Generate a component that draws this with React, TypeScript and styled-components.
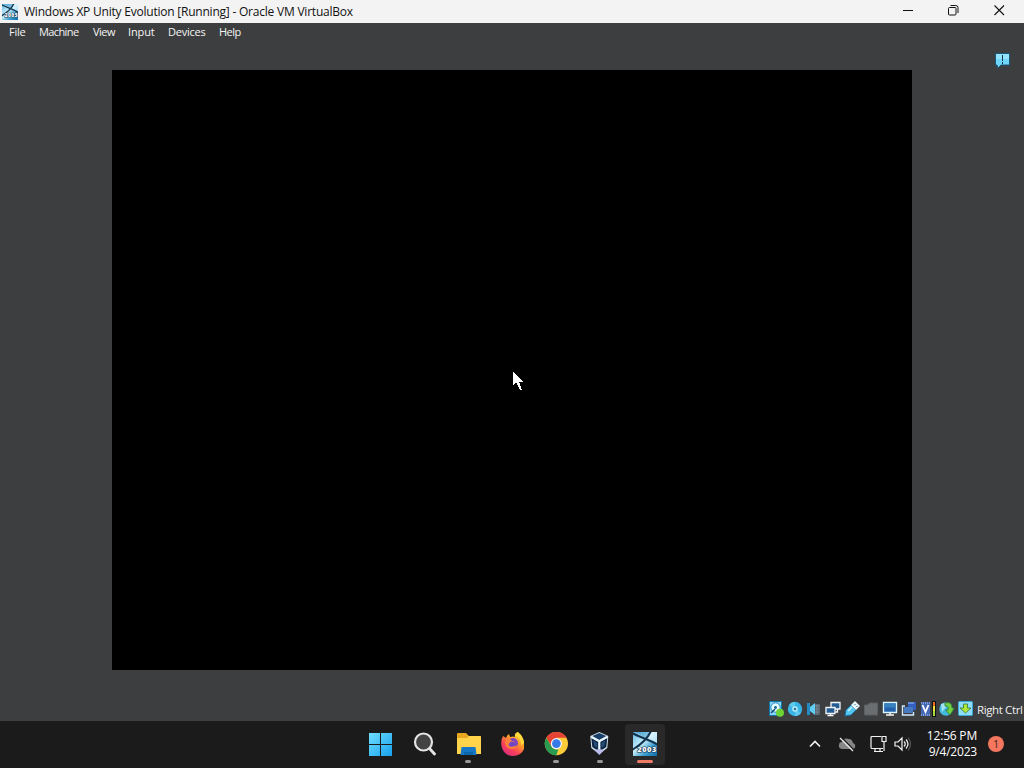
import React from "react";
import styled, { createGlobalStyle } from "styled-components";

const Global = createGlobalStyle`
  * { box-sizing: border-box; }
  html, body { margin: 0; padding: 0; overflow: hidden; }
  body { font-family: "Open Sans", "Noto Sans", sans-serif; }
  svg { display: block; flex: none; }
`;

const Desktop = styled.div`
  width: 1024px;
  height: 768px;
  display: flex;
  flex-direction: column;
  background: #3c3e3f;
  overflow: hidden;
`;

const TitleBar = styled.header`
  height: 23px;
  flex: none;
  display: flex;
  align-items: center;
  padding-left: 2px;
  background: #f3f3f3;
  color: #111;
`;

const Title = styled.div`
  flex: 1;
  margin-left: 6px;
  font-size: 12px;
  line-height: 23px;
  letter-spacing: -0.22px;
  white-space: nowrap;
`;

const WindowButtons = styled.div`
  display: flex;
  height: 21px;
  margin-right: 2px;
  align-self: flex-start;
`;

const WindowButton = styled.button`
  width: 45.5px;
  padding: 0;
  border: 0;
  background: none;
  display: flex;
  align-items: center;
  justify-content: center;
`;

const MenuBar = styled.nav`
  height: 20px;
  flex: none;
  display: flex;
  padding-left: 9px;
  color: #f4f4f4;
`;

const MenuItem = styled.div<{ $width: number; $tracking?: number }>`
  width: ${(p) => p.$width}px;
  flex: none;
  font-size: 11px;
  line-height: 18px;
  letter-spacing: ${(p) => p.$tracking ?? -0.25}px;
  white-space: nowrap;
`;

const Workspace = styled.main`
  flex: 1;
  min-height: 0;
  display: grid;
  grid-template-columns: 112px 800px 112px;
  padding-top: 27px;
  align-items: start;
`;

const GuestScreen = styled.section`
  position: relative;
  grid-column: 2;
  height: 600px;
  background: #000;
`;

const Pointer = styled.svg`
  position: absolute;
  left: 401px;
  top: 302px;
`;

const NoticeColumn = styled.aside`
  grid-column: 3;
  display: flex;
  justify-content: flex-end;
  margin-top: -19px;
  padding-right: 13px;
`;

const StatusBar = styled.footer`
  height: 24px;
  flex: none;
  display: flex;
  align-items: center;
  justify-content: flex-end;
  gap: 3px;
  padding-right: 1px;
`;

const HostKey = styled.span`
  width: 46px;
  padding-top: 1px;
  color: #f0f0f0;
  font-size: 11.5px;
  line-height: 24px;
  letter-spacing: -0.38px;
  white-space: nowrap;
`;

const Taskbar = styled.div`
  height: 47px;
  flex: none;
  display: grid;
  grid-template-columns: 358px 308px 1fr;
  background: #1b1b1b;
`;

const Apps = styled.div`
  grid-column: 2;
  display: flex;
`;

const AppButton = styled.div<{ $active?: boolean }>`
  width: ${(p) => (p.$active ? 40 : 44)}px;
  height: 41px;
  margin-top: 3px;
  margin-left: ${(p) => (p.$active ? 3 : 0)}px;
  display: flex;
  flex-direction: column;
  align-items: center;
  padding-top: 8px;
  background: ${(p) => (p.$active ? "#292929" : "transparent")};
  border-radius: 4px;
`;

const Running = styled.i<{ $active?: boolean }>`
  width: ${(p) => (p.$active ? 16 : 6)}px;
  height: 3px;
  margin-top: 4px;
  border-radius: 2px;
  background: ${(p) => (p.$active ? "#f07c67" : "#989898")};
`;

const Tray = styled.div`
  grid-column: 3;
  display: flex;
  align-items: center;
  justify-content: flex-end;
  padding: 0 20px 1px 0;
`;

const TrayIcon = styled.div<{ $gap: number }>`
  margin-right: ${(p) => p.$gap}px;
`;

const Clock = styled.div`
  width: 54px;
  margin-right: 11px;
  color: #fff;
  font-size: 12px;
  line-height: 16px;
  letter-spacing: -0.2px;
  text-align: right;
  white-space: nowrap;
`;

const Badge = styled.div`
  width: 16px;
  height: 16px;
  border-radius: 50%;
  background: #f4765f;
  color: #3b1b16;
  font-size: 10px;
  line-height: 16px;
  text-align: center;
`;

const GuestLogo = ({ size }: { size: number }) => (
  <svg width={size} height={size} viewBox="0 0 24 24">
    <defs>
      <linearGradient id="sky" x1="0" y1="0" x2="1" y2="1">
        <stop offset="0" stopColor="#67b9e3" />
        <stop offset=".42" stopColor="#c8effd" />
        <stop offset=".7" stopColor="#3e9fd0" />
        <stop offset="1" stopColor="#0b6ba8" />
      </linearGradient>
    </defs>
    <path fill="url(#sky)" d="M0 0h24v24H0z" />
    <path fill="#2485bd" d="M2 0h15l-4 6z" opacity=".4" />
    <path fill="#e0f8ff" d="m14 6 4-6h6v11z" opacity=".75" />
    <path d="M-1 1C6 5 16 7 25 13M18-1C15 6 9 12-1 18" fill="none" stroke="#12344e" strokeWidth="2.1" />
    <text x="13.8" y="20.2" textAnchor="middle" fontFamily="Open Sans, sans-serif" fontSize="7.5" fontWeight="800" fill="#fff" stroke="#123047" strokeWidth="1.2" paintOrder="stroke" textLength="19">2003</text>
  </svg>
);

const statusIcons: React.ReactNode[] = [
  <>
    <path d="M1.5.5h12v14h-12z" fill="#8bd5f7" stroke="#1475ad" />
    <circle cx="7.5" cy="6.5" r="4.7" fill="#e5faff" stroke="#1c84bd" />
    <circle cx="7.5" cy="6.5" r="1.4" fill="#176798" />
    <path d="m3 12 4-4" stroke="#164767" strokeWidth="1.5" />
    <circle cx="12" cy="11.8" r="4" fill="#6bd334" />
  </>,
  <>
    <circle cx="8" cy="8" r="7.2" fill="#39b4e7" />
    <path d="M8 8 2 4a7 7 0 0 1 6-3zM8 8l6 4a7 7 0 0 1-6 3z" fill="#60c9ee" />
    <circle cx="8" cy="8" r="2.8" fill="#b6ecf8" />
    <circle cx="8" cy="8" r="1.2" fill="#28718f" />
  </>,
  <>
    <path d="M1 2h3v12H1z" fill="#248ac4" />
    <path d="m4 6 5-4v12l-5-4z" fill="#62cdf4" />
    <path d="M9 3h5v11H9z" fill="#526069" />
    <path d="M9 5h5M9 8h5M9 11h5M11 3v11" stroke="#8a969d" strokeWidth=".7" />
  </>,
  <g stroke="#f3f8fb" strokeWidth="1.3">
    <path d="M6 1.5h9v6.5H6z" fill="#275d95" />
    <path d="M12.5 8v3h-2" fill="none" />
    <path d="M1 6.5h9v6H1z" fill="#275d95" />
    <path d="M5.5 12.5v2m-3 0h6" />
  </g>,
  <>
    <path d="m1 15 1-6 5-5 5 5-5 5z" fill="#55c5f1" stroke="#176e9c" />
    <path d="m7 4 4-4 5 5-4 4z" fill="#e9f6fa" />
    <path d="M10.5 3l1 1m1 1 1 1" stroke="#386b84" />
    <path d="m4 10 4-4" stroke="#c6f4ff" strokeWidth="1.5" />
  </>,
  <path d="M1.5 4h3l2-2h8v12h-13z" fill="#6b6e70" stroke="#5c5f61" />,
  <>
    <path d="M1.5 1.5h13v10h-13z" fill="#2463ac" stroke="#d9f5ff" strokeWidth="1.4" />
    <path d="M2.5 2.5h11v4h-11z" fill="#3683c0" />
    <path d="M8 12v2m-4 0h8" stroke="#f7f7f7" strokeWidth="1.5" />
  </>,
  <>
    <path d="M7 1h8v8H7z" fill="#325fc0" />
    <path d="M7 2h6" stroke="#9bbdf0" />
    <path d="M4 5H1.5v9h11v-3" fill="none" stroke="#d4eaff" strokeWidth="1.4" />
    <path d="M3 6h9v6H3z" fill="#4779c0" />
  </>,
  <>
    <path d="M1 1h9v14H1z" fill="#4567b7" />
    <path d="M1 2h9M1 14h9" stroke="#b8cdf2" strokeDasharray="1 1" />
    <path d="m2.5 4 3 7 3-7" fill="none" stroke="#fff" strokeWidth="1.8" />
    <path d="M12 0h4v16h-4z" fill="#111" />
    <path d="M13 1h2v5h-2z" fill="#ed6c25" />
    <path d="M13 5h2v5h-2z" fill="#ece338" />
    <path d="M13 10h2v5h-2z" fill="#a8d940" />
  </>,
  <>
    <circle cx="7" cy="8" r="6.7" fill="#43badf" />
    <path d="m2 3 4-1 1 4-4 5z" fill="#a1e3f3" />
    <path d="M6 2q7-2 7 5h2.5L11 14 6.5 9H9Q10 5 6 5z" fill="#73cf42" stroke="#277338" strokeWidth=".8" />
  </>,
  <>
    <rect x=".5" y=".5" width="14" height="14" rx="1" fill="#8fdcf7" stroke="#36a8d6" />
    <path d="M5.5 3h4v4H13l-5.5 5L2 7h3.5z" fill="#b2e835" stroke="#34733b" strokeWidth=".8" />
  </>,
];

const App = () => (
  <>
    <Global />
    <Desktop>
      <TitleBar>
        <GuestLogo size={16} />
        <Title>Windows XP Unity Evolution [Running] - Oracle VM VirtualBox</Title>
        <WindowButtons>
          <WindowButton aria-label="Minimize">
            <svg width="11" height="11"><path d="M0 5.5h10" stroke="#111" /></svg>
          </WindowButton>
          <WindowButton aria-label="Restore">
            <svg width="11" height="11" fill="none" stroke="#111">
              <rect x=".5" y="2.5" width="7.5" height="7.5" rx="1" />
              <path d="M2.5.5h5.3a2.2 2.2 0 0 1 2.2 2.2V8" />
            </svg>
          </WindowButton>
          <WindowButton aria-label="Close">
            <svg width="11" height="11"><path d="m.5.5 9.5 9.5m0-9.5L.5 10" stroke="#111" strokeWidth="1.1" /></svg>
          </WindowButton>
        </WindowButtons>
      </TitleBar>
      <MenuBar>
        <MenuItem $width={30}>File</MenuItem>
        <MenuItem $width={54} $tracking={-0.6}>Machine</MenuItem>
        <MenuItem $width={35} $tracking={-0.5}>View</MenuItem>
        <MenuItem $width={40} $tracking={-0.12}>Input</MenuItem>
        <MenuItem $width={51}>Devices</MenuItem>
        <MenuItem $width={30} $tracking={-0.5}>Help</MenuItem>
      </MenuBar>
      <Workspace>
        <GuestScreen>
          <Pointer width="12" height="20" shapeRendering="crispEdges">
            <path d="M0 0v13l3-3 4 8h2l-3-8h4z" fill="#fff" />
          </Pointer>
        </GuestScreen>
        <NoticeColumn>
          <svg width="17" height="18">
            <path d="M1.5 2.5h14V14H7l-3 3-1-3H1.5z" fill="#70d5fa" stroke="#195778" />
            <path d="M2 3h13v5H2z" fill="#b6efff" opacity=".5" />
            <path d="M8.5 4v6m0 1v2" stroke="#12364a" />
          </svg>
        </NoticeColumn>
      </Workspace>
      <StatusBar>
        {statusIcons.map((icon, i) => (
          <svg key={i} width="16" height="16" viewBox="0 0 16 16">{icon}</svg>
        ))}
        <HostKey>Right Ctrl</HostKey>
      </StatusBar>
      <Taskbar>
        <Apps>
          <AppButton>
            <svg width="24" height="24">
              <defs><linearGradient id="win" x2="1" y2="1"><stop stopColor="#70dfff" /><stop offset="1" stopColor="#16a0ee" /></linearGradient></defs>
              <path fill="url(#win)" d="M1 1h11v11H1zM13 1h11v11H13zM1 13h11v11H1zM13 13h11v11H13z" />
            </svg>
          </AppButton>
          <AppButton>
            <svg width="24" height="26" fill="none">
              <circle cx="11.5" cy="10" r="8.5" fill="#434343" stroke="#e5e5e5" strokeWidth="2.2" />
              <path d="m18 17 4.5 5" stroke="#e5e5e5" strokeWidth="2.8" strokeLinecap="round" />
            </svg>
          </AppButton>
          <AppButton>
            <svg width="26" height="24">
              <path d="M2 2q0-1 1-1h8l3 3h11q1 0 1 1v17H2z" fill="#e7a71f" />
              <path d="M2 6h10l2-2h11q1 0 1 1v17H2z" fill="#ffd34a" />
              <path d="M6.5 15h14l1 8h-16z" fill="#1677c4" />
              <path d="M9 20h9v3H9z" fill="#0b67ac" />
            </svg>
            <Running />
          </AppButton>
          <AppButton>
            <svg width="24" height="24" viewBox="-1 1 24 24">
              <defs>
                <linearGradient id="fire" x1=".9" y1="0" x2=".2" y2="1"><stop stopColor="#ffed43" /><stop offset=".4" stopColor="#ff9b27" /><stop offset=".7" stopColor="#f94159" /><stop offset="1" stopColor="#d82a85" /></linearGradient>
              </defs>
              <path d="m2 5 3 2q1-3 3-4l1 3q3-1 5 0-1-4 3-5 0 3 4 6 4 6 2 11-3 7-11 7T1 17Q-1 10 2 5" fill="url(#fire)" />
              <circle cx="12" cy="12" r="5" fill="#8045bd" />
              <path d="M5 7q4 0 6 3l3 1q-1 2-4 2.5 2 3 6 1-1 3.5-5 3.5-6 0-7-6z" fill="#ff803b" />
              <path d="M10 10.5q5 0 4 3t-5 2q-2-1-1-3z" fill="#7046c2" />
              <path d="M14 5q7 2 6 9l3-2q0-6-6-11-2 2-3 4" fill="#ffdb3c" />
            </svg>
          </AppButton>
          <AppButton>
            <svg width="24" height="24" viewBox="-.8 0 24.8 24.8">
              <circle cx="12" cy="12" r="12" fill="#ffcc39" />
              <path d="M12 12 6.8 15 1.6 6A12 12 0 0 1 22.4 6H12z" fill="#e64235" />
              <path d="M1.6 6 6.8 15Q9 18 12 18h2l-2 6A12 12 0 0 1 1.6 6" fill="#289b50" />
              <circle cx="12" cy="12" r="5.8" fill="#f4f7ff" />
              <circle cx="12" cy="12" r="4.5" fill="#3679e8" />
            </svg>
            <Running />
          </AppButton>
          <AppButton>
            <svg width="24" height="24" viewBox=".7 1 24 24">
              <path d="m12 1 9 4-1 12-8 6-8-6L3 5z" fill="#d2e3ee" />
              <path d="m12 2 7 3-7 4-7-4z" fill="#193f66" />
              <path d="m4 7 7 4v9l-6-4zM20 7l-7 4v9l6-4z" fill="#0d2541" />
              <path d="m6 9 4 3v5l-3-2zM18 9l-4 3v5l3-2z" fill="#234c77" />
              <path d="m4 6 8 4 8-4M12 10v12" fill="none" stroke="#edfaff" strokeWidth="1.7" />
              <path d="m7 19 5 5 5-5-5-1z" fill="#b9bbec" />
            </svg>
            <Running />
          </AppButton>
          <AppButton $active><GuestLogo size={24} /><Running $active /></AppButton>
        </Apps>
        <Tray>
          <TrayIcon $gap={17}>
            <svg width="12" height="10"><path d="m1 7.5 5-5 5 5" fill="none" stroke="#f4f4f4" strokeWidth="1.6" /></svg>
          </TrayIcon>
          <TrayIcon $gap={14}>
            <svg width="18" height="16">
              <path d="M4 13q-4-1-3-4 0-3 3-3 2-5 7-3 3 0 4 4 3 1 2 4 0 2-3 2z" fill="#858585" />
              <path d="m4 2 12 12" stroke="#1b1b1b" strokeWidth="1.2" />
              <path d="m2 2 13 13" stroke="#eee" strokeWidth="1.2" />
            </svg>
          </TrayIcon>
          <TrayIcon $gap={7}>
            <svg width="17" height="18" fill="none" stroke="#f2f2f2" strokeWidth="1.2">
              <path d="M11 1.5H2q-1 0-1 1v10q0 1 1 1h11M5 13v3m5-3v3M4 16.5h9M12 1.5h4v5h-4zM14 7v9" />
            </svg>
          </TrayIcon>
          <TrayIcon $gap={12}>
            <svg width="17" height="16" fill="none" stroke="#f3f3f3" strokeWidth="1.2">
              <path d="M1 6h3l4-4v12l-4-4H1zM10 5.5q2.5 2.5 0 5M12 3.5q4 4.5 0 9" />
              <path d="M14 1.5q5 6.5 0 13" stroke="#555" />
            </svg>
          </TrayIcon>
          <Clock><div>12:56 PM</div><div>9/4/2023</div></Clock>
          <Badge>1</Badge>
        </Tray>
      </Taskbar>
    </Desktop>
  </>
);

export default App;
